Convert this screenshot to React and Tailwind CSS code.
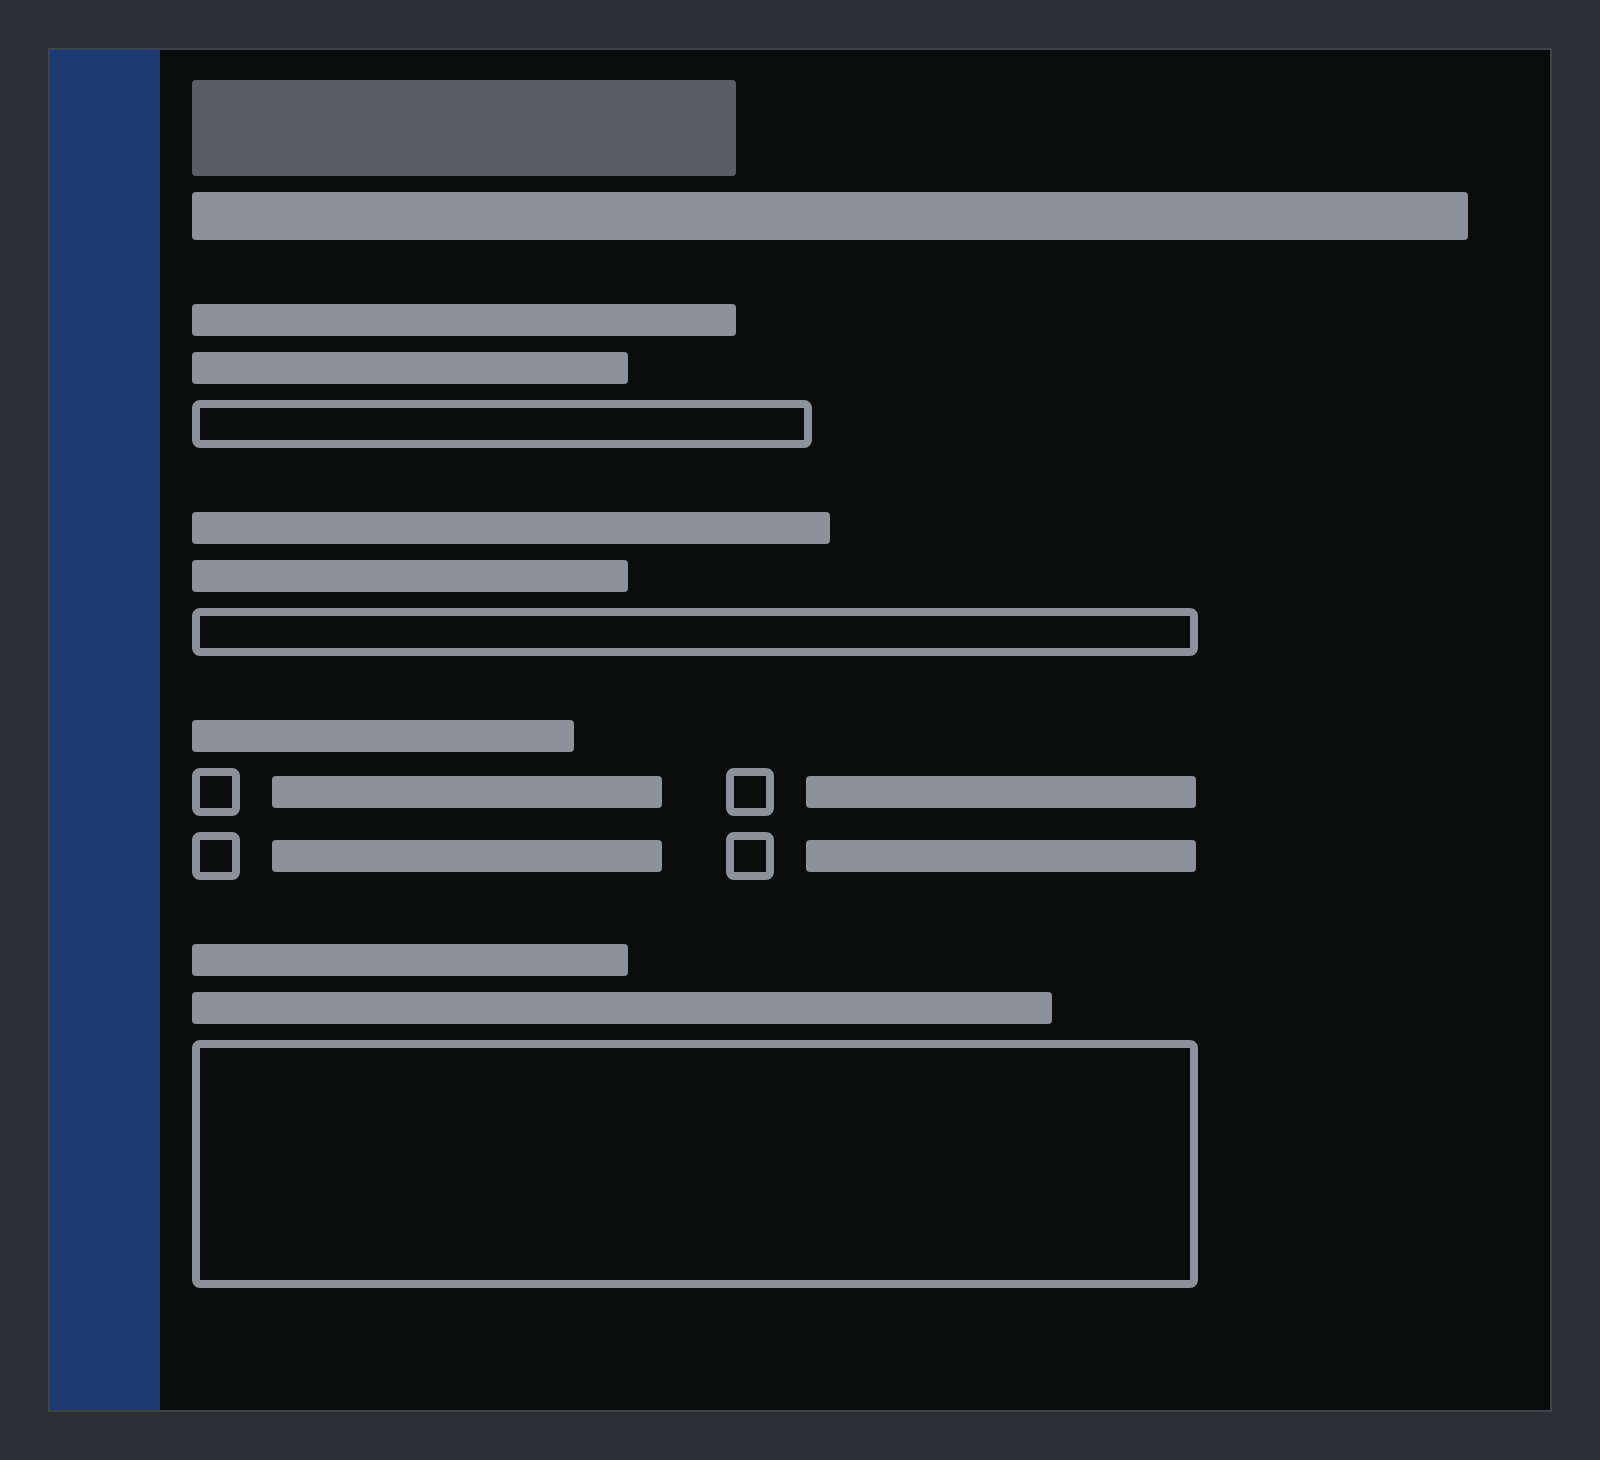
import React from 'react';

function Bar({ w }) {
  return <div className={`h-8 rounded bg-[#8b929c] ${w}`} />;
}

function Field({ label, hint, box }) {
  return (
    <div className="flex flex-col gap-4">
      <Bar w={label} />
      <Bar w={hint} />
      <div className={`rounded-lg border-8 border-[#8b929c] ${box}`} />
    </div>
  );
}

function CheckItem() {
  return (
    <div className="flex items-center gap-8">
      <div className="h-12 w-12 shrink-0 rounded-lg border-8 border-[#8b929c]" />
      <Bar w="w-[390px]" />
    </div>
  );
}

export default function App() {
  return (
    <div className="min-h-[1460px] bg-[#2c2f34] p-12">
      <div className="flex h-[1364px] border-2 border-[#3f434a] bg-[#0b0d0d]">
        <aside className="w-[110px] shrink-0 bg-[#1c3a74]" />

        <main className="flex flex-1 flex-col pl-8 pt-[30px]">
          <div className="flex flex-col gap-4">
            <div className="h-24 w-[544px] rounded bg-[#575e68]" />
            <div className="h-12 w-[1276px] rounded bg-[#8b929c]" />
          </div>

          <div className="mt-16 flex flex-col gap-16">
            <Field label="w-[544px]" hint="w-[436px]" box="h-12 w-[620px]" />
            <Field label="w-[638px]" hint="w-[436px]" box="h-12 w-[1006px]" />

            <div className="flex flex-col gap-4">
              <Bar w="w-[382px]" />
              <div className="grid w-[1006px] grid-cols-[470px_470px] gap-x-16 gap-y-4">
                <CheckItem />
                <CheckItem />
                <CheckItem />
                <CheckItem />
              </div>
            </div>

            <Field label="w-[436px]" hint="w-[860px]" box="h-[248px] w-[1006px]" />
          </div>
        </main>
      </div>
    </div>
  );
}
